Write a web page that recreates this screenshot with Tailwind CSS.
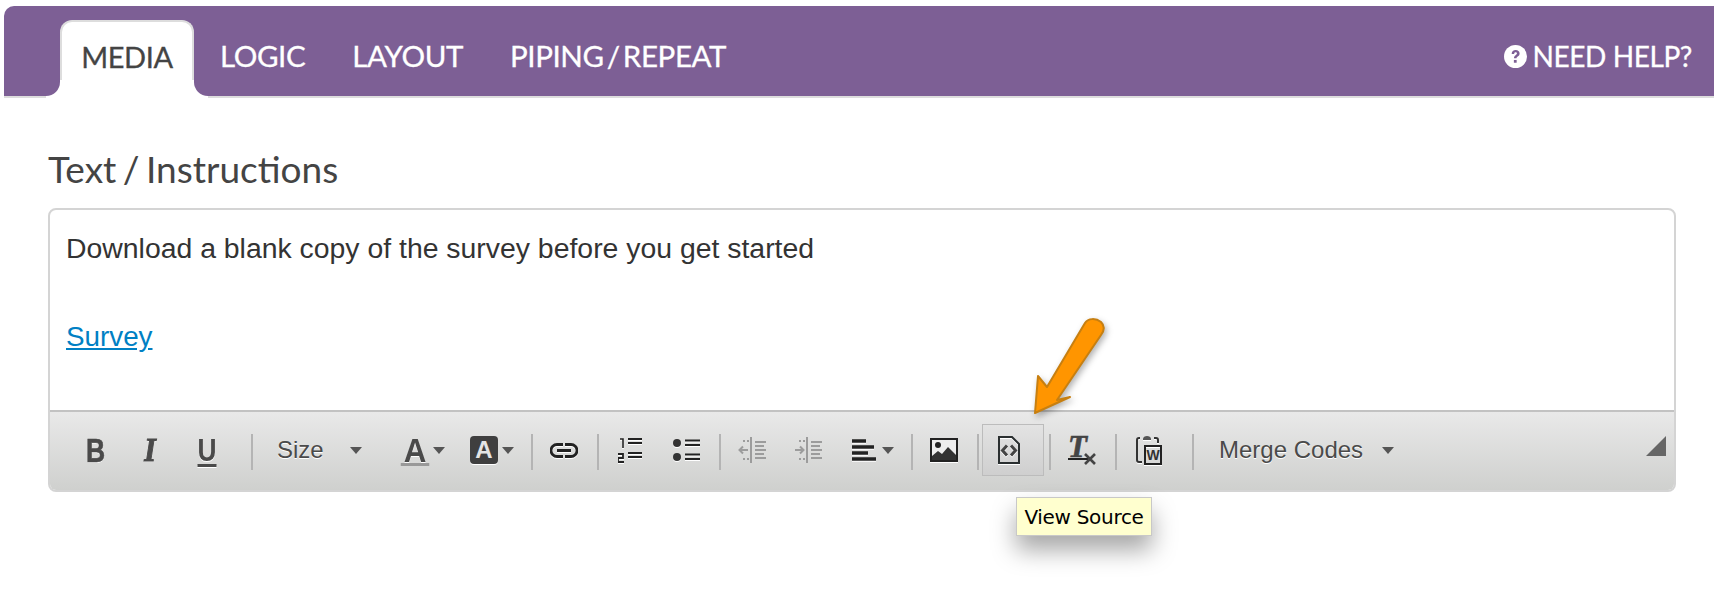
<!DOCTYPE html>
<html lang="en">
<head>
    <meta charset="UTF-8">
    <title>Text / Instructions</title>
    <script src="https://cdn.jsdelivr.net/npm/@tailwindcss/browser@4"></script>
</head>
<body class="bg-white overflow-hidden font-['Lato',sans-serif]">
<div class="relative w-[1714px] h-[596px] pt-[6px]">

    <!-- tabs -->
    <header class="ml-[4px] h-[92px] bg-[#7d5f95] border-b-2 border-[#dddddd] rounded-tl-[10px] flex items-end pl-[56px] pr-[22px] text-[29.500px] tracking-[-0.4px] [word-spacing:-4px] [-webkit-text-stroke:0.3px] text-white">
        <div class="relative w-[134px] h-[78px] -mb-[2px] bg-white border-t-2 border-x-2 border-[#dddddd] rounded-t-[12px] flex items-center justify-center text-[#444444] text-[29px] pb-[6px]">
            MEDIA
            <span class="absolute left-[-16px] bottom-0 w-[16px] h-[18px] bg-white"><span class="block w-[14px] h-[16px] bg-[#7d5f95] rounded-br-[14px]"></span></span>
            <span class="absolute right-[-16px] bottom-0 w-[16px] h-[18px] bg-white flex justify-end"><span class="block w-[14px] h-[16px] bg-[#7d5f95] rounded-bl-[14px]"></span></span>
        </div>
        <a class="ml-[26px] h-[76px] flex items-center pb-[4px]">LOGIC</a>
        <a class="ml-[47px] h-[76px] flex items-center pb-[4px]">LAYOUT</a>
        <a class="ml-[47px] h-[76px] flex items-center pb-[4px]">PIPING / REPEAT</a>
        <a class="ml-auto h-[76px] flex items-center gap-[6px] pb-[4px] text-[28px] [word-spacing:0]">
            <svg width="23" height="23" viewBox="0 0 24 24"><circle cx="12" cy="12" r="12" fill="#fff"/><path d="M8 9.300c0-2.500 1.800-4 4.200-4 2.300 0 4.100 1.400 4.100 3.500 0 1.700-1 2.500-2 3.200-.8.600-1.200 1-1.200 1.900h-2.700c0-1.800.7-2.600 1.700-3.300.8-.6 1.400-1 1.400-1.700 0-.8-.6-1.300-1.400-1.300-.9 0-1.500.6-1.500 1.700z" fill="#7d5f95"/><rect x="10.300" y="15.600" width="2.900" height="2.900" fill="#7d5f95"/></svg>
            NEED HELP?
        </a>
    </header>

    <main class="pl-[48px] pr-[38px]">
        <h2 class="mt-[50px] text-[37px] leading-[42px] text-[#444444] [word-spacing:-3px]">Text / Instructions</h2>

        <!-- editor -->
        <div class="mt-[18px] border-2 border-[#d4d4d4] rounded-[8px] overflow-hidden font-['Liberation_Sans',sans-serif]">
            <div class="h-[200px] pl-[16px] pt-[16px] text-[28.400px] leading-[44px] text-[#333333]">
                <p>Download a blank copy of the survey before you get started</p>
                <p class="mt-[44px]"><a class="text-[27.800px] text-[#0080c4] underline">Survey</a></p>
            </div>

            <div class="relative h-[80px] border-t-2 border-[#c2c2c2] bg-gradient-to-b from-[#e9e9e9] to-[#cfd0ce] flex items-center pb-[2px] text-[#4a4a4a] [text-shadow:0_1px_0_#fff]">
                <span class="ml-[36px] w-[19px] flex justify-center text-[34px] leading-none font-bold scale-x-[.78] [-webkit-text-stroke:0.6px]">B</span>
                <span class="ml-[37px] w-[16px] flex justify-center text-[33px] leading-none font-bold italic font-['Liberation_Serif',serif] scale-x-[.9] [-webkit-text-stroke:1px]">I</span>
                <span class="ml-[38px] w-[22px] flex justify-center text-[31px] leading-none font-bold underline underline-offset-[3px] scale-x-[.85]">U</span>
                <i class="ml-[33px] mt-[4px] w-[2px] h-[36px] bg-[#b4b4b4]"></i>

                <span class="ml-[24px] w-[46px] text-[24px] whitespace-nowrap">Size</span>
                <svg class="ml-[27px]" width="12" height="7" viewBox="0 0 12 7"><path d="M0 0h12L6 7z" fill="#555"/></svg>
                <span class="ml-[38px] w-[30px] flex justify-center text-[33px] leading-[32px] font-bold border-b-[3px] border-[#999999] h-[31px] scale-x-[.95]">A</span>
                <svg class="ml-[3px]" width="12" height="7" viewBox="0 0 12 7"><path d="M0 0h12L6 7z" fill="#555"/></svg>
                <span class="ml-[25px] w-[28px] h-[28px] bg-[#3f3f3f] rounded-[4px] flex items-center justify-center text-[24px] font-bold text-[#e4e4e4] [text-shadow:none] shadow-[0_1px_0_#fff]">A</span>
                <svg class="ml-[4px]" width="12" height="7" viewBox="0 0 12 7"><path d="M0 0h12L6 7z" fill="#555"/></svg>
                <i class="ml-[17px] mt-[4px] w-[2px] h-[36px] bg-[#b4b4b4]"></i>

                <!-- link -->
                <svg class="ml-[17px] drop-shadow-[0_1px_0_#fff]" width="28" height="15" viewBox="0 0 28 15" fill="none" stroke="#222" stroke-width="2.800"><path d="M13 1.500H7a6 6 0 0 0 0 12h6M15 1.500h6a6 6 0 0 1 0 12h-6M7 7.500h14"/></svg>
                <i class="ml-[19px] mt-[4px] w-[2px] h-[36px] bg-[#b4b4b4]"></i>

                <!-- numbered list -->
                <svg class="ml-[19px] drop-shadow-[0_1px_0_#fff]" width="24" height="26" viewBox="0 0 24 26" fill="none" stroke="#222" stroke-width="2"><path d="M10 2h14M10 6h14M10 16h14M10 20h14"/><path d="M2 2h3v9" stroke-width="1.600"/><path d="M0 17h5v4H0v4h6" stroke-width="1.800"/></svg>
                <!-- bullet list -->
                <svg class="ml-[31px] drop-shadow-[0_1px_0_#fff]" width="27" height="22" viewBox="0 0 27 22"><circle cx="4" cy="4" r="4" fill="#333"/><circle cx="4" cy="18" r="4" fill="#333"/><path d="M12 1.500h15M12 6h15M12 15.500h15M12 20h15" stroke="#222" stroke-width="2"/></svg>
                <i class="ml-[19px] mt-[4px] w-[2px] h-[36px] bg-[#b4b4b4]"></i>

                <!-- outdent -->
                <svg class="ml-[17px]" width="28" height="26" viewBox="0 0 28 26" fill="none" stroke="#9c9c9c" stroke-width="2"><path d="M13 0v26"/><path d="M17 5h11M17 9h9M17 13h11M17 17h9M17 21h11"/><path d="M10 13H2M5 9.500 1.500 13 5 16.500"/><path d="M5 4h2M9 4h2M5 22h2M9 22h2"/></svg>
                <!-- indent -->
                <svg class="ml-[28px]" width="28" height="26" viewBox="0 0 28 26" fill="none" stroke="#9c9c9c" stroke-width="2"><path d="M13 0v26"/><path d="M17 5h11M17 9h9M17 13h11M17 17h9M17 21h11"/><path d="M1 13h8M6 9.500 9.500 13 6 16.500"/><path d="M5 4h2M9 4h2M5 22h2M9 22h2"/></svg>
                <!-- align -->
                <svg class="ml-[30px] drop-shadow-[0_1px_0_#fff]" width="24" height="22" viewBox="0 0 24 22"><path d="M0 2h14M0 8h22M0 14h16M0 20h24" stroke="#222" stroke-width="3.400"/></svg>
                <svg class="ml-[6px]" width="12" height="7" viewBox="0 0 12 7"><path d="M0 0h12L6 7z" fill="#555"/></svg>
                <i class="ml-[17px] mt-[4px] w-[2px] h-[36px] bg-[#b4b4b4]"></i>

                <!-- image -->
                <svg class="ml-[17px] drop-shadow-[0_1px_0_#fff]" width="28" height="24" viewBox="0 0 28 24"><rect x="1" y="1" width="26" height="22" fill="#eee" stroke="#222" stroke-width="2"/><circle cx="8" cy="7" r="3" fill="#222"/><path d="M2 22v-4l6-5 4 3 6-7 8 8v5z" fill="#333"/></svg>
                <i class="ml-[19px] mt-[4px] w-[2px] h-[36px] bg-[#b4b4b4]"></i>

                <!-- view source, hovered -->
                <span class="ml-[3px] w-[62px] h-[52px] border border-[#bcbcbc] bg-gradient-to-b from-[#e3e3e3] to-[#cfcfcf] flex items-center justify-center pr-[8px]">
                    <svg class="drop-shadow-[0_1px_0_#fff]" width="22" height="28" viewBox="0 0 22 28" fill="none" stroke="#2a2f30" stroke-width="2"><path d="M1 1h13l7 7v19H1z"/><path d="M9 9.500 4.500 14.500l4.500 5M13 9.500l4.500 5-4.500 5" stroke-width="3" stroke="#444"/></svg>
                </span>
                <i class="ml-[5px] mt-[4px] w-[2px] h-[36px] bg-[#b4b4b4]"></i>

                <!-- remove format -->
                <span class="ml-[17px] w-[28px] h-[30px] relative [text-shadow:none]">
                    <span class="absolute left-0 top-[-3px] text-[31px] leading-[30px] font-bold italic font-['Liberation_Serif',serif] text-[#444444] [-webkit-text-stroke:0.6px]">T</span>
                    <i class="absolute left-0 top-[23px] w-[20px] h-[2px] bg-[#222222]"></i>
                    <svg class="absolute left-[16px] top-[18px]" width="12" height="12" viewBox="0 0 12 12" stroke="#444" stroke-width="2.600"><path d="M1 1l10 10M11 1 1 11"/></svg>
                </span>
                <i class="ml-[19px] mt-[4px] w-[2px] h-[36px] bg-[#b4b4b4]"></i>

                <!-- paste from word -->
                <span class="ml-[19px] w-[26px] h-[30px] relative flex items-start [text-shadow:none]">
                    <svg class="drop-shadow-[0_1px_0_#fff]" width="26" height="30" viewBox="0 0 26 30" fill="none"><path d="M4 3H3a2 2 0 0 0-2 2v20a2 2 0 0 0 2 2h3M18 3h2a2 2 0 0 1 2 2v3" stroke="#333" stroke-width="2"/><path d="M7 4c0-2 2-3 4-3s4 1 4 3v1H7z" fill="#555"/><rect x="9" y="11" width="16" height="18" stroke="#222" stroke-width="2"/></svg>
                    <span class="absolute left-[10px] top-[13px] w-[14px] text-center text-[14px] leading-[14px] font-bold text-[#333333]">W</span>
                </span>
                <i class="ml-[30px] mt-[4px] w-[2px] h-[36px] bg-[#b4b4b4]"></i>

                <span class="ml-[25px] w-[143px] text-[24px] whitespace-nowrap">Merge Codes</span>
                <svg class="ml-[20px]" width="12" height="7" viewBox="0 0 12 7"><path d="M0 0h12L6 7z" fill="#555"/></svg>

                <svg class="absolute right-[8px] top-[24px]" width="20" height="20" viewBox="0 0 20 20"><path d="M20 0v20H0z" fill="#666"/></svg>
            </div>
        </div>
    </main>

    <!-- tooltip -->
    <div class="absolute left-[1016px] top-[497px] w-[136px] h-[39px] bg-[#ffffcf] border border-[#c8c8c8] flex items-center justify-center text-[20px] text-black whitespace-nowrap font-['DejaVu_Sans',sans-serif] tracking-[-0.3px] shadow-[0_14px_24px_rgba(0,0,0,0.35)]">View Source</div>

    <!-- callout arrow -->
    <svg class="absolute left-[1020px] top-[310px] drop-shadow-[2px_3px_3px_rgba(0,0,0,0.3)]" width="100" height="115" viewBox="0 0 100 115">
        <path d="M65 13 C68 8 76 8 81 12 C85 16 84 21 81 25 L37 90 L50 87 L15 103 L18 66 L27 77 Z" fill="#ff9500" stroke="#c77f10" stroke-width="2" stroke-linejoin="round"/>
    </svg>
</div>
</body>
</html>
